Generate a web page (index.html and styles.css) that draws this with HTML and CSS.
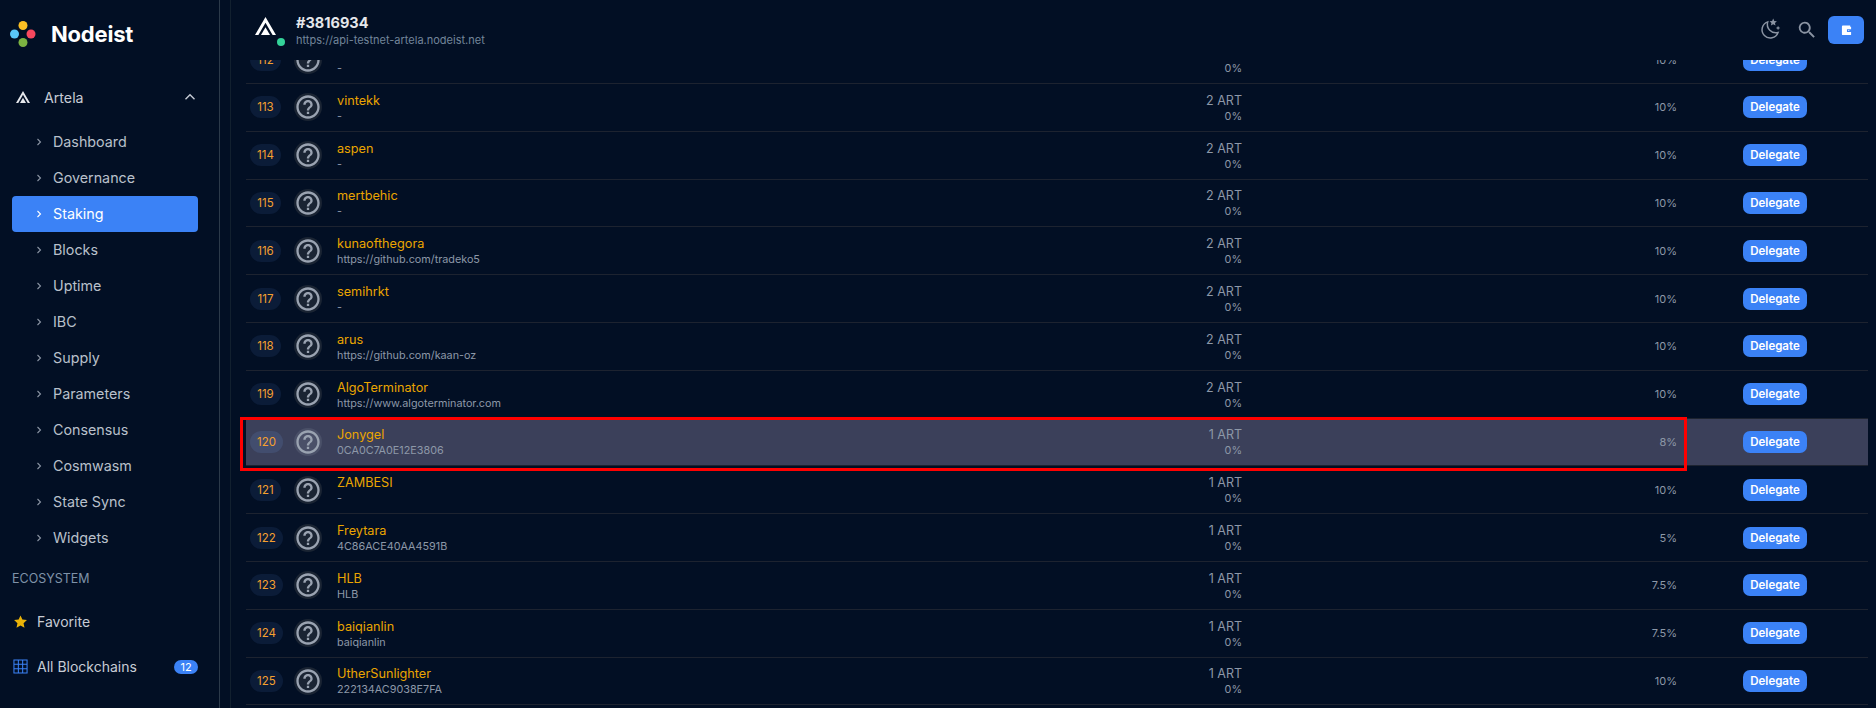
FILE: index.html
```html
<!DOCTYPE html>
<html lang="en">
<head>
<meta charset="utf-8">
<title>Nodeist</title>
<link rel="stylesheet" href="styles.css">
</head>
<body>
<svg class="defs" width="0" height="0" aria-hidden="true">
  <symbol id="help" viewBox="0 0 24 24"><path d="M11 18h2v-2h-2v2zm1-16C6.48 2 2 6.48 2 12s4.48 10 10 10 10-4.48 10-10S17.52 2 12 2zm0 18c-4.41 0-8-3.59-8-8s3.59-8 8-8 8 3.59 8 8-3.59 8-8 8zm0-14c-2.21 0-4 1.79-4 4h2c0-1.1.9-2 2-2s2 .9 2 2c0 2-3 1.75-3 5h2c0-2.25 3-2.5 3-5 0-2.21-1.79-4-4-4z"/></symbol>
  <symbol id="artela" viewBox="0 0 21 18"><path d="M10.5 0 21 18h-3.4L10.5 5.8 3.4 18H0z"/><path d="M10.5 10.2 15 18H6z"/></symbol>
  <symbol id="chev" viewBox="0 0 6 8"><path d="M1.5 1 4.5 4 1.5 7" fill="none" stroke="currentColor" stroke-width="1.1"/></symbol>
</svg>
<div class="app">
  <aside class="sidebar">
    <div class="brand">
      <svg class="logo" viewBox="0 0 28 28"><circle cx="14" cy="5.5" r="4.5" fill="#fbbf24"/><circle cx="5.5" cy="14" r="4.5" fill="#5ac8fa"/><circle cx="22" cy="14" r="4.5" fill="#f8485e"/><circle cx="14" cy="22.5" r="4.5" fill="#7cb342"/></svg>
      <span class="brand-name">Nodeist</span>
    </div>
    <div class="chain">
      <svg class="chain-icon"><use href="#artela"/></svg>
      <span class="chain-name">Artela</span>
      <svg class="chain-toggle" viewBox="0 0 12 8"><path d="M1.5 6.2 6 1.7l4.5 4.5" fill="none" stroke="currentColor" stroke-width="1.4"/></svg>
    </div>
    <nav class="nav">
      <a class="nav-item"><svg class="chev"><use href="#chev"/></svg>Dashboard</a>
      <a class="nav-item"><svg class="chev"><use href="#chev"/></svg>Governance</a>
      <a class="nav-item active"><svg class="chev"><use href="#chev"/></svg>Staking</a>
      <a class="nav-item"><svg class="chev"><use href="#chev"/></svg>Blocks</a>
      <a class="nav-item"><svg class="chev"><use href="#chev"/></svg>Uptime</a>
      <a class="nav-item"><svg class="chev"><use href="#chev"/></svg>IBC</a>
      <a class="nav-item"><svg class="chev"><use href="#chev"/></svg>Supply</a>
      <a class="nav-item"><svg class="chev"><use href="#chev"/></svg>Parameters</a>
      <a class="nav-item"><svg class="chev"><use href="#chev"/></svg>Consensus</a>
      <a class="nav-item"><svg class="chev"><use href="#chev"/></svg>Cosmwasm</a>
      <a class="nav-item"><svg class="chev"><use href="#chev"/></svg>State Sync</a>
      <a class="nav-item"><svg class="chev"><use href="#chev"/></svg>Widgets</a>
    </nav>
    <div class="section-title">ECOSYSTEM</div>
    <a class="eco-item fav">
      <svg class="eco-icon" viewBox="0 0 24 24"><path fill="#eab308" d="M12 2.2l3 6.7 7.3.8-5.4 4.9 1.5 7.2L12 18.2l-6.400 3.600 1.500-7.200L1.700 9.700 9 8.900z"/></svg>
      <span>Favorite</span>
    </a>
    <a class="eco-item all">
      <svg class="eco-icon" viewBox="0 0 16 16"><path fill="none" stroke="#3b82f6" stroke-width="1.1" d="M1 1h14v14H1zM1 5.700h14M1 10.300h14M5.700 1v14M10.300 1v14"/></svg>
      <span class="eco-label">All Blockchains</span>
      <span class="count">12</span>
    </a>
  </aside>
  <main class="main">
    <header class="topbar">
      <div class="node-icon">
        <svg class="node-logo"><use href="#artela"/></svg>
        <span class="status-dot"></span>
      </div>
      <div class="node-text">
        <div class="node-id">#3816934</div>
        <div class="node-url">https://api-testnet-artela.nodeist.net</div>
      </div>
      <div class="top-actions">
        <svg class="top-icon moon" viewBox="0 0 24 24"><path fill="none" stroke="#8b94a3" stroke-width="1.600" d="M9.500 4.200a9 9 0 1 0 11.300 11.600 9.300 9.300 0 0 1-11.300-11.600z"/><path fill="#8b94a3" d="M15.500 .5l1.200 2.700 2.800.3-2.100 1.900.6 2.800-2.500-1.500-2.500 1.500.6-2.800-2.100-1.900 2.800-.3zM20.800 8.500l.7 1.700 1.700.7-1.700.7-.7 1.700-.7-1.700-1.700-.7 1.700-.7z"/></svg>
        <svg class="top-icon search" viewBox="0 0 24 24"><path fill="#8b94a3" d="M9.500 3a6.500 6.500 0 0 1 4.940 10.730l.27.27h.79l5 5-1.500 1.500-5-5v-.79l-.27-.27A6.500 6.500 0 1 1 9.500 3zm0 2a4.500 4.500 0 1 0 0 9 4.500 4.500 0 0 0 0-9z"/></svg>
        <button class="wallet" type="button"><svg class="wallet-icon" viewBox="0 0 12 12"><path fill="#fff" fill-rule="evenodd" d="M1 1.500C1 .9 1.400.5 2 .5h8v1.500h1v9H2c-.6 0-1-.4-1-1zM6.500 4.500v3H11v-3zM8 5.400h1v1.200H8z"/></svg></button>
      </div>
    </header>
    <section class="viewport">
      <div class="rows">
        <div class="row"><span class="rank">112</span><span class="avatar"><svg><use href="#help"/></svg></span><div class="who"><div class="name">Chain</div><div class="sub">-</div></div><div class="stake"><div class="amount">2 ART</div><div class="sub">0%</div></div><div class="comm">10%</div><div class="act"><button class="delegate" type="button">Delegate</button></div></div>
        <div class="row"><span class="rank">113</span><span class="avatar"><svg><use href="#help"/></svg></span><div class="who"><div class="name">vintekk</div><div class="sub">-</div></div><div class="stake"><div class="amount">2 ART</div><div class="sub">0%</div></div><div class="comm">10%</div><div class="act"><button class="delegate" type="button">Delegate</button></div></div>
        <div class="row"><span class="rank">114</span><span class="avatar"><svg><use href="#help"/></svg></span><div class="who"><div class="name">aspen</div><div class="sub">-</div></div><div class="stake"><div class="amount">2 ART</div><div class="sub">0%</div></div><div class="comm">10%</div><div class="act"><button class="delegate" type="button">Delegate</button></div></div>
        <div class="row"><span class="rank">115</span><span class="avatar"><svg><use href="#help"/></svg></span><div class="who"><div class="name">mertbehic</div><div class="sub">-</div></div><div class="stake"><div class="amount">2 ART</div><div class="sub">0%</div></div><div class="comm">10%</div><div class="act"><button class="delegate" type="button">Delegate</button></div></div>
        <div class="row"><span class="rank">116</span><span class="avatar"><svg><use href="#help"/></svg></span><div class="who"><div class="name">kunaofthegora</div><div class="sub">https://github.com/tradeko5</div></div><div class="stake"><div class="amount">2 ART</div><div class="sub">0%</div></div><div class="comm">10%</div><div class="act"><button class="delegate" type="button">Delegate</button></div></div>
        <div class="row"><span class="rank">117</span><span class="avatar"><svg><use href="#help"/></svg></span><div class="who"><div class="name">semihrkt</div><div class="sub">-</div></div><div class="stake"><div class="amount">2 ART</div><div class="sub">0%</div></div><div class="comm">10%</div><div class="act"><button class="delegate" type="button">Delegate</button></div></div>
        <div class="row"><span class="rank">118</span><span class="avatar"><svg><use href="#help"/></svg></span><div class="who"><div class="name">arus</div><div class="sub">https://github.com/kaan-oz</div></div><div class="stake"><div class="amount">2 ART</div><div class="sub">0%</div></div><div class="comm">10%</div><div class="act"><button class="delegate" type="button">Delegate</button></div></div>
        <div class="row"><span class="rank">119</span><span class="avatar"><svg><use href="#help"/></svg></span><div class="who"><div class="name">AlgoTerminator</div><div class="sub">https://www.algoterminator.com</div></div><div class="stake"><div class="amount">2 ART</div><div class="sub">0%</div></div><div class="comm">10%</div><div class="act"><button class="delegate" type="button">Delegate</button></div></div>
        <div class="row selected"><span class="rank">120</span><span class="avatar"><svg><use href="#help"/></svg></span><div class="who"><div class="name">Jonygel</div><div class="sub">0CA0C7A0E12E3806</div></div><div class="stake"><div class="amount">1 ART</div><div class="sub">0%</div></div><div class="comm">8%</div><div class="act"><button class="delegate" type="button">Delegate</button></div><span class="marker"></span></div>
        <div class="row"><span class="rank">121</span><span class="avatar"><svg><use href="#help"/></svg></span><div class="who"><div class="name">ZAMBESI</div><div class="sub">-</div></div><div class="stake"><div class="amount">1 ART</div><div class="sub">0%</div></div><div class="comm">10%</div><div class="act"><button class="delegate" type="button">Delegate</button></div></div>
        <div class="row"><span class="rank">122</span><span class="avatar"><svg><use href="#help"/></svg></span><div class="who"><div class="name">Freytara</div><div class="sub">4C86ACE40AA4591B</div></div><div class="stake"><div class="amount">1 ART</div><div class="sub">0%</div></div><div class="comm">5%</div><div class="act"><button class="delegate" type="button">Delegate</button></div></div>
        <div class="row"><span class="rank">123</span><span class="avatar"><svg><use href="#help"/></svg></span><div class="who"><div class="name">HLB</div><div class="sub">HLB</div></div><div class="stake"><div class="amount">1 ART</div><div class="sub">0%</div></div><div class="comm">7.5%</div><div class="act"><button class="delegate" type="button">Delegate</button></div></div>
        <div class="row"><span class="rank">124</span><span class="avatar"><svg><use href="#help"/></svg></span><div class="who"><div class="name">baiqianlin</div><div class="sub">baiqianlin</div></div><div class="stake"><div class="amount">1 ART</div><div class="sub">0%</div></div><div class="comm">7.5%</div><div class="act"><button class="delegate" type="button">Delegate</button></div></div>
        <div class="row"><span class="rank">125</span><span class="avatar"><svg><use href="#help"/></svg></span><div class="who"><div class="name">UtherSunlighter</div><div class="sub">222134AC9038E7FA</div></div><div class="stake"><div class="amount">1 ART</div><div class="sub">0%</div></div><div class="comm">10%</div><div class="act"><button class="delegate" type="button">Delegate</button></div></div>
      </div>
    </section>
  </main>
</div>
</body>
</html>
```
FILE: styles.css
```css
* { box-sizing: border-box; }
html, body { margin: 0; height: 100%; overflow: hidden; }
body { background: #020f24; color: #a6adba; font-family: Inter, "Liberation Sans", sans-serif; font-size: 14px; }
.defs { position: absolute; }
.app { display: flex; height: 708px; }

.sidebar { width: 220px; flex: none; border-right: 1px solid #2c3a4a; padding: 0 21px 0 12px; display: flex; flex-direction: column; }
.brand { display: flex; align-items: center; height: 68px; margin-left: -3px; }
.logo { width: 28px; height: 28px; margin: 0 14px 0 0; }
.brand-name { color: #fff; font-size: 22px; font-weight: 700; letter-spacing: -.2px; }
.chain { display: flex; align-items: center; height: 36px; margin-top: 11px; padding-left: 4px; color: #c7ccd5; }
.chain-icon { width: 14px; height: 12px; fill: #e6e8ec; margin-right: 14px; }
.chain-name { flex: 1; font-size: 14.200px; }
.chain-toggle { width: 12px; height: 8px; margin-right: 2px; color: #c7ccd5; }
.nav { display: flex; flex-direction: column; margin-top: 8.500px; }
.nav-item { display: flex; align-items: center; height: 36px; padding-left: 24px; border-radius: 4px; color: #b9c0cb; font-size: 14.300px; }
.nav-item.active { background: #3b82f6; color: #fff; }
.chev { width: 6px; height: 8px; margin-right: 11px; color: #8b94a3; }
.active .chev { color: #fff; }
.section-title { margin-top: 13px; height: 20px; line-height: 20px; font-size: 12.500px; color: #7f92a8; }
.eco-item { display: flex; align-items: center; height: 36px; color: #c7ccd5; }
.fav { margin-top: 15px; padding-left: 1px; }
.all { margin-top: 9px; padding-left: 1px; }
.eco-icon { width: 15px; height: 15px; margin-right: 9px; flex: none; }
.eco-label { flex: 1; }
.count { width: 24px; height: 14px; line-height: 14px; text-align: center; border-radius: 7px; background: #3b82f6; color: #fff; font-size: 11px; }

.main { flex: 1; min-width: 0; margin-left: 10px; border-left: 1px solid #12202f; display: flex; flex-direction: column; height: 708px; }
.topbar { height: 60px; flex: none; display: flex; align-items: center; padding: 0 12px 0 24px; }
.node-icon { width: 41px; height: 34px; position: relative; }
.node-logo { width: 21px; height: 18px; fill: #fff; position: absolute; left: 0; top: 4px; }
.status-dot { position: absolute; left: 22px; top: 25px; width: 8px; height: 8px; border-radius: 50%; background: #34d399; }
.node-id { color: #e5e7eb; font-size: 14.500px; font-weight: 700; line-height: 20px; }
.node-url { color: #72859a; font-size: 11px; line-height: 14px; }
.top-actions { margin-left: auto; display: flex; align-items: center; }
.top-icon { width: 22px; height: 22px; }
.moon { margin-top: -2px; }
.search { margin-left: 15px; }
.wallet { width: 36px; height: 28px; margin-left: 10px; padding: 0; border: 0; border-radius: 6px; background: #3b82f6; display: flex; align-items: center; justify-content: center; }
.wallet-icon { width: 11px; height: 11px; }

.viewport { flex: 1; overflow: hidden; padding-left: 15px; padding-right: 8px; }
.rows { margin-top: -23.800px; }
.row { position: relative; height: 47.800px; display: grid; grid-template-columns: 44px 43px 1fr 242px 435px 130px; align-items: center; padding: 0 61px 0 4px; border-bottom: 1px solid #1d2330; }
.rank { justify-self: start; min-width: 31px; padding: 0 7px; height: 22px; line-height: 22px; text-align: center; border-radius: 11px; background: #0b1c38; color: #f5a030; font-size: 11.500px; }
.avatar { width: 28px; height: 28px; border-radius: 50%; background: #1a2433; display: block; }
.avatar svg { display: block; width: 28px; height: 28px; fill: #9aa3b1; }
.who, .stake { line-height: 16px; padding-top: 3px; }
.name { color: #eaa500; font-size: 12.700px; }
.sub { font-size: 10.800px; color: #8d98a8; }
.stake { text-align: right; }
.amount { color: #8d98a8; font-size: 12.500px; }
.comm { text-align: right; font-size: 11px; color: #8d98a8; }
.act { padding-left: 66px; }
.delegate { display: block; width: 64px; height: 22px; padding: 0; border: 0; border-radius: 7px; background: #3b82f6; color: #fff; font: 600 11.500px Inter, "Liberation Sans", sans-serif; }
.selected { background: #3b405a; }
.selected .rank { background: #424d6e; }
.selected .avatar { background: #4a5068; }
.marker { position: absolute; left: -6.500px; top: -2px; width: 1447px; height: 54px; border: 3px solid #f00; pointer-events: none; }
```
